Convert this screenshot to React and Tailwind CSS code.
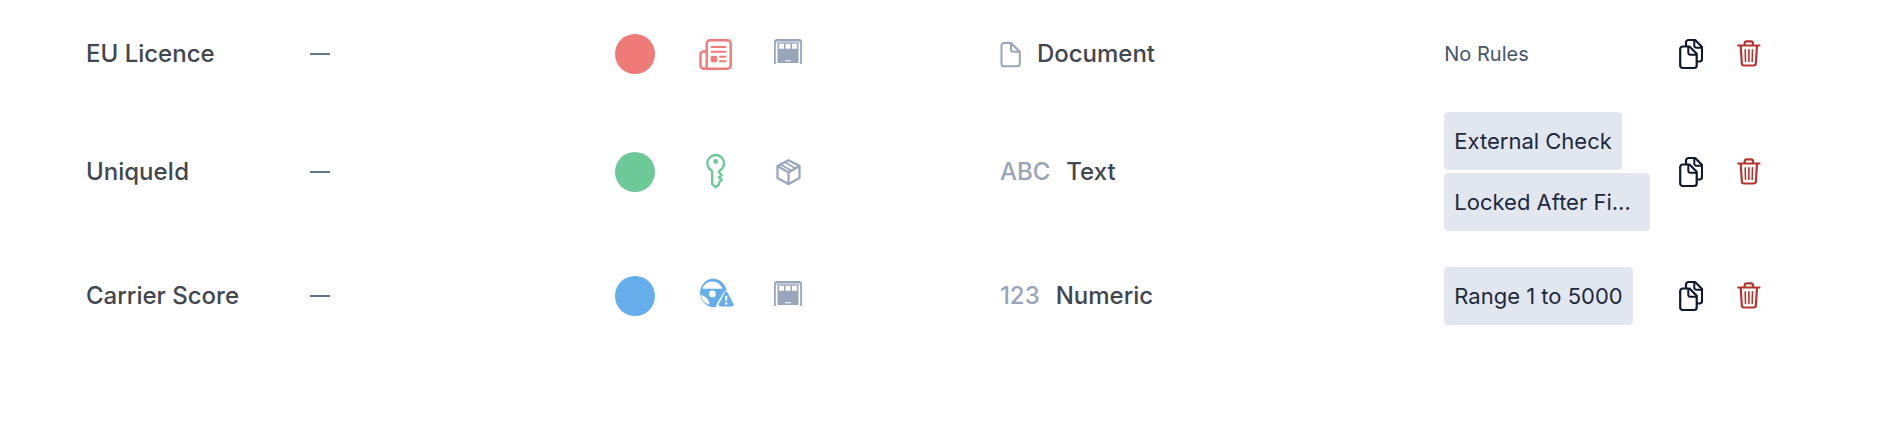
const NewsIcon = () => (
  <svg className="h-9 w-9" viewBox="0 0 36 36" fill="none" stroke="currentColor" strokeWidth="2.400" strokeLinecap="round" strokeLinejoin="round">
    <path d="M8.500 15.500H5.500a3 3 0 0 0-3 3v11a3.200 3.200 0 0 0 3.200 3.200" />
    <path d="M5.700 32.700a3 3 0 0 0 3-3V7.500a3.200 3.200 0 0 1 3.200-3.200h17.600a3.200 3.200 0 0 1 3.200 3.200v22a3.200 3.200 0 0 1-3.200 3.200z" />
    <path d="M13.500 11h14M13.500 15.700h14M22 20.700h5.500M22 25.300h5.500" strokeWidth="2" />
    <rect x="12.700" y="19.700" width="6.500" height="6.500" rx="1.800" fill="currentColor" stroke="none" />
  </svg>
);

const KeyIcon = () => (
  <svg className="h-9 w-9" viewBox="0 0 36 36" fill="none" stroke="currentColor" strokeWidth="2.400" strokeLinejoin="round">
    <path d="M14.200 16.800a8.300 8.300 0 1 1 7 0v1.700l2.500 2.600-2.700 2.400 2.700 2.500-2.700 2.300v2.200l-3.300 2.700-3.500-2.900V16.800" />
    <circle cx="17.700" cy="7.500" r="2.400" fill="currentColor" stroke="none" />
  </svg>
);

const SteeringIcon = () => (
  <svg className="h-9 w-9" viewBox="0 1 35 35" fill="currentColor">
    <path
      fillRule="evenodd"
      d="M14 1.500a14 14 0 0 1 13.900 12.300c-1.600-.2-2.800.6-3.600 2l-6 10.400c-.7 1.200-.7 2.300-.3 3.100A14 14 0 1 1 14 1.500zM4.300 11.400h19.500C22.500 7.300 18.700 4.300 14 4.300s-8.500 3-9.700 7.100zM14 13.200a3.300 3.300 0 1 0 0 6.600 3.300 3.300 0 0 0 0-6.600zM2.900 17.700c.7 4.500 3.900 8.100 8.200 9-.3-4.600-3.200-8.500-8.200-9z"
    />
    <path
      fillRule="evenodd"
      d="M25.900 15.300a1.700 1.700 0 0 1 3 0l5.700 11a1.600 1.600 0 0 1-1.400 2.300H21.600a1.600 1.600 0 0 1-1.400-2.300zM26.400 18.200v4.900h2v-4.900zM27.400 24.500a1.200 1.200 0 1 0 0 2.400 1.200 1.200 0 0 0 0-2.400z"
    />
  </svg>
);

const TrailerIcon = () => (
  <svg className="mb-1 h-7 w-7" viewBox="0 0 28 28" fill="currentColor">
    <path d="M0 26V4a3 3 0 0 1 3-3h22a3 3 0 0 1 3 3v22h-1.800V4.500a1.200 1.200 0 0 0-1.200-1.200H3a1.200 1.200 0 0 0-1.200 1.200V26z" />
    <path d="M2 3h24v2H2z" opacity="0.4" />
    <path
      fillRule="evenodd"
      d="M3.500 4.500h21V25h-21zM5 5.700v5h5v-5zM11.500 5.700v5h5v-5zM18 5.700v5h5v-5zM11 22.300v1h6v-1z"
    />
  </svg>
);

const BoxIcon = () => (
  <svg className="h-7 w-7" viewBox="0 0 28 28" fill="none" stroke="currentColor" strokeWidth="2.200" strokeLinecap="round" strokeLinejoin="round">
    <path d="M14.500 2.200L25.500 8v12L14.500 26 3.500 20V8z" />
    <path d="M3.700 8.200l10.800 6 10.800-6M14.500 14.200V26" />
    <path d="M11.300 4.300l9.800 5.900M7 6.800l10.300 5.700" strokeWidth="1.700" />
  </svg>
);

const FileIcon = () => (
  <svg className="h-7 w-[21px]" viewBox="0 0 21 28" fill="none" stroke="currentColor" strokeWidth="2" strokeLinejoin="round">
    <path d="M4 3h7l8.800 8.800v12a2.500 2.500 0 0 1-2.500 2.500H4a2.500 2.500 0 0 1-2.500-2.500V5.500A2.500 2.500 0 0 1 4 3z" />
    <path d="M11 3v6.800a2 2 0 0 0 2 2h6.800" />
  </svg>
);

const CopyIcon = () => (
  <svg className="h-8 w-6" viewBox="0 0 24 32" fill="none" stroke="currentColor" strokeWidth="2.200" strokeLinejoin="round">
    <path d="M3.700 8.500h6.800l7.200 7.200v11.800a2.500 2.500 0 0 1-2.500 2.500H3.700a2.500 2.500 0 0 1-2.500-2.500V11a2.500 2.500 0 0 1 2.500-2.500z" />
    <path d="M9.300 8.800v5.900a2 2 0 0 0 2 2h6" strokeWidth="2" />
    <path d="M7 8V4.500A2.500 2.500 0 0 1 9.500 2h6.600l7 7v12a2.500 2.500 0 0 1-2.500 2.500h-2.600" />
    <path d="M15.300 2.300v5.400a2 2 0 0 0 2 2h5.500" strokeWidth="2" />
  </svg>
);

const TrashIcon = () => (
  <svg className="h-8 w-6" viewBox="0 0 24 32" fill="none" stroke="currentColor" strokeWidth="2.200" strokeLinecap="round" strokeLinejoin="round">
    <path d="M1.200 7.500h21.300M3.700 7.500l1.100 17.800a2.300 2.300 0 0 0 2.300 2.200h9.500a2.300 2.300 0 0 0 2.300-2.200L20 7.500M7.700 7.500V5.300a2 2 0 0 1 2-2h4.300a2 2 0 0 1 2 2v2.200" />
    <path d="M8.200 11.800l.3 11.700M11.900 11.800v11.700M15.500 11.800l-.3 11.700" strokeWidth="1.600" />
  </svg>
);

const rows = [
  {
    name: "EU Licence",
    color: "bg-[#ef7b78]",
    iconColor: "text-[#ef7b78]",
    icon: <NewsIcon />,
    scope: <TrailerIcon />,
    typeIcon: <FileIcon />,
    type: "Document",
    rules: [],
  },
  {
    name: "UniqueId",
    color: "bg-[#6dc997]",
    iconColor: "text-[#6dc997]",
    icon: <KeyIcon />,
    scope: <BoxIcon />,
    typeIcon: "ABC",
    type: "Text",
    rules: [{ label: "External Check" }, { label: "Locked After Fi…", wide: true }],
  },
  {
    name: "Carrier Score",
    color: "bg-[#66adeb]",
    iconColor: "text-[#66adeb]",
    icon: <SteeringIcon />,
    scope: <TrailerIcon />,
    typeIcon: "123",
    type: "Numeric",
    rules: [{ label: "Range 1 to 5000" }],
  },
];

const Row = ({ row }) => (
  <tr className="h-20">
    <td className="font-medium">{row.name}</td>
    <td>
      <div className="h-0.5 w-5 bg-slate-500"></div>
    </td>
    <td>
      <div className="flex items-center">
        <div className={`h-10 w-10 rounded-full ${row.color}`}></div>
        <div className={`ml-[43px] ${row.iconColor}`}>{row.icon}</div>
        <div className="ml-10 text-[#98a5bb]">{row.scope}</div>
      </div>
    </td>
    <td>
      <div className="flex items-center gap-4 font-medium">
        <span className="text-[#98a5bb]">{row.typeIcon}</span>
        <span>{row.type}</span>
      </div>
    </td>
    <td className="py-[18px]">
      {row.rules.length === 0 && <div className="text-xl text-slate-600">No Rules</div>}
      <div className="flex flex-col items-start gap-[3px]">
        {row.rules.map((rule) => (
          <span
            key={rule.label}
            className={`rounded bg-[#e2e7ef] px-2.5 py-[13px] text-[22px] leading-8 whitespace-nowrap text-slate-800 ${rule.wide ? "w-[206px]" : ""}`}
          >
            {rule.label}
          </span>
        ))}
      </div>
    </td>
    <td>
      <div className="flex items-center gap-[34px]">
        <button type="button" aria-label="Duplicate" className="text-slate-900">
          <CopyIcon />
        </button>
        <button type="button" aria-label="Delete" className="text-[#b3362e]">
          <TrashIcon />
        </button>
      </div>
    </td>
  </tr>
);

const App = () => {
  return (
    <main className="bg-white pt-3.5 pl-[86px] font-['Inter',sans-serif] text-2xl text-[#41464f]">
      <table className="w-full table-fixed">
        <colgroup>
          <col className="w-[12.500%]" />
          <col className="w-[17%]" />
          <col className="w-[21.500%]" />
          <col className="w-[24.800%]" />
          <col className="w-[13.100%]" />
          <col />
        </colgroup>
        <tbody>
          {rows.map((row) => (
            <Row key={row.name} row={row} />
          ))}
        </tbody>
      </table>
    </main>
  );
};

export default App;
